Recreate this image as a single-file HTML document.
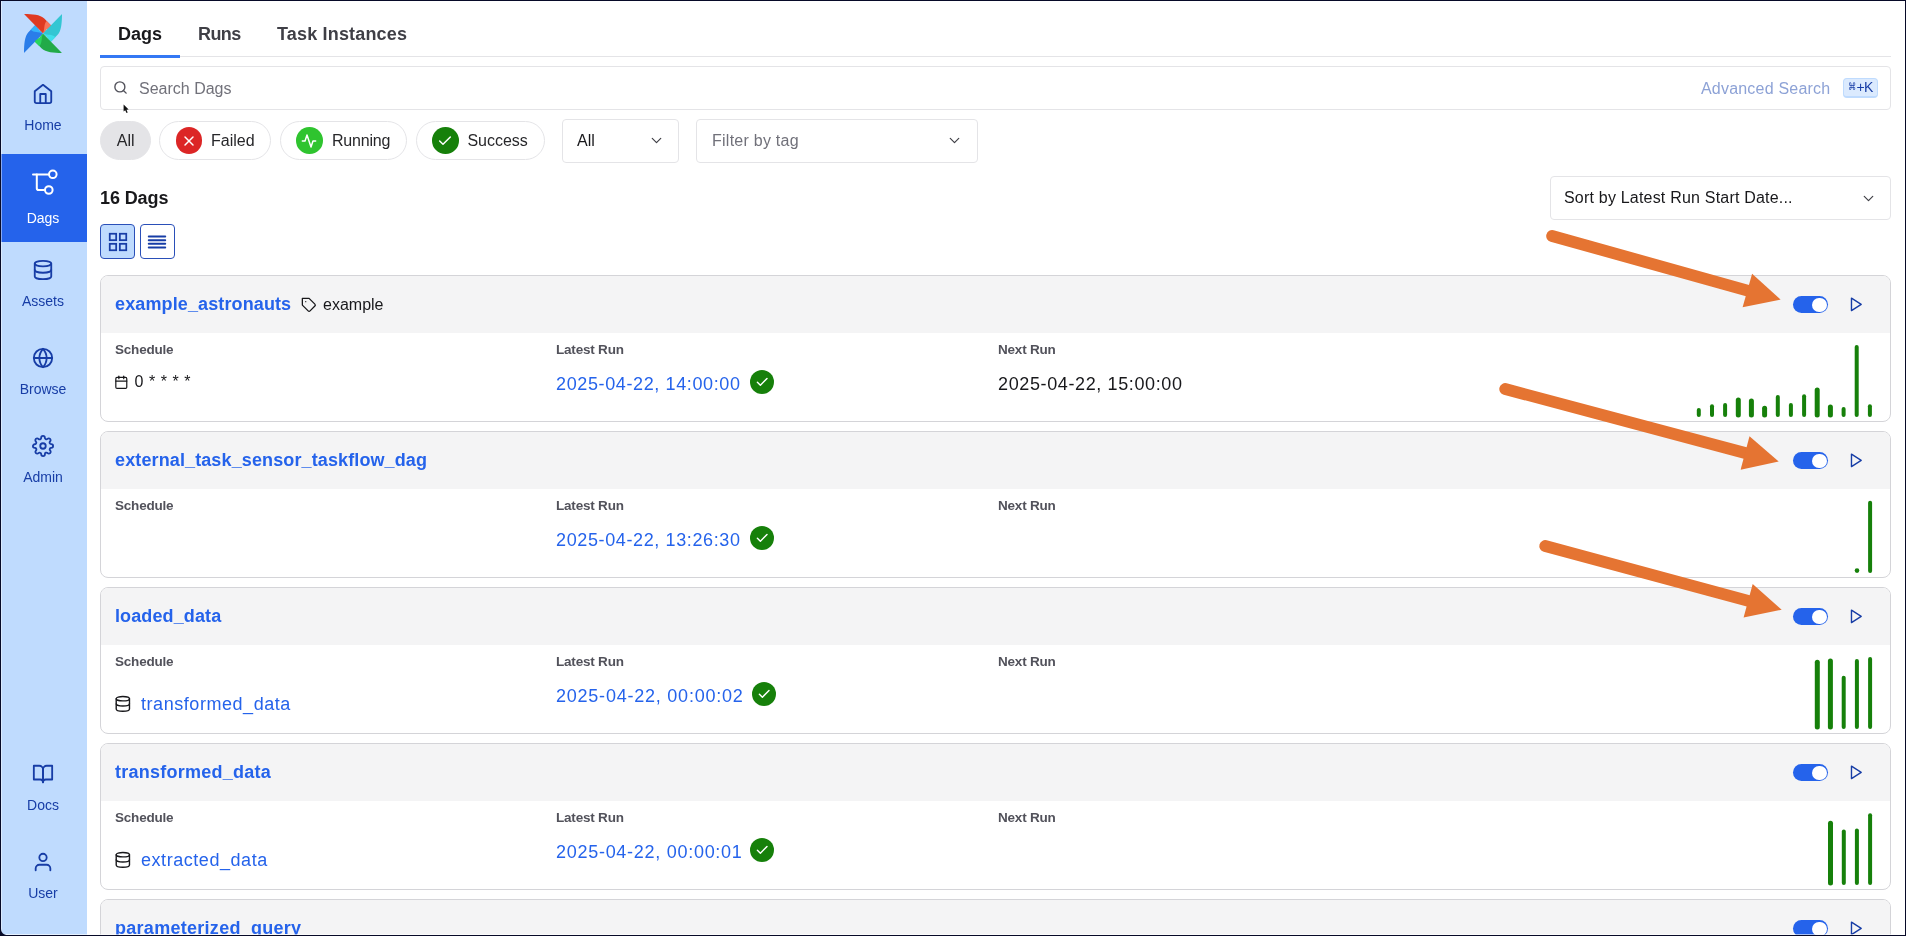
<!DOCTYPE html>
<html lang="en">
<head>
<meta charset="utf-8">
<title>Dags - Airflow</title>
<style>
*{box-sizing:border-box;margin:0;padding:0}
html,body{width:1906px;height:936px;overflow:hidden;background:#fff}
body{font-family:"Liberation Sans",sans-serif;color:#18181b;position:relative}
.abs{position:absolute}
a{text-decoration:none;color:inherit}
/* window frame */
#frame-top{left:0;top:0;width:1906px;height:1px;background:#070a28}
#frame-left{left:0;top:0;width:1px;height:936px;background:#070a28}
#frame-right{left:1905px;top:0;width:1px;height:936px;background:#070a28}
#frame-bottom{left:0;top:935px;width:1906px;height:1px;background:#070a28}
#hl-bottom{left:1px;top:934px;width:1904px;height:1px;background:rgba(255,255,255,.6)}
#hl-left{left:1px;top:1px;width:1px;height:933px;background:rgba(255,255,255,.45)}
#main{position:absolute;left:0;top:0;width:1906px;height:936px;will-change:transform}
/* sidebar */
#sidebar{left:1px;top:1px;width:86px;height:934px;background:#bfdbfe;will-change:transform}
.nav{position:absolute;left:0;width:86px;height:88px;color:#173da6}
.nav.active{background:#2563eb;color:#fff}
.nav svg{position:absolute;fill:none;stroke:currentColor;stroke-linecap:round;stroke-linejoin:round}
.nav span{position:absolute;left:-1px;width:86px;text-align:center;font-size:14px;line-height:16px;letter-spacing:0}
/* tabs */
.tab{top:23px;font-size:18px;font-weight:700;line-height:22px;color:#3f3f46;white-space:nowrap}
/* generic */
.box{border:1px solid #e4e4e7;border-radius:4px;background:#fff}
.pill{top:121px;height:39px;border:1px solid #e4e4e7;border-radius:20px;background:#fff}
.pill .dot{position:absolute;left:15.8px;top:5.2px;width:26.6px;height:26.6px;border-radius:50%}
.pill .dot svg{position:absolute;left:5px;top:5.6px;width:16px;height:16px;fill:none;stroke:#fff;stroke-width:2.2;stroke-linecap:round;stroke-linejoin:round}
.pill span{position:absolute;top:9.4px;font-size:16px;line-height:20px;color:#27272a;white-space:nowrap}
.ico{fill:none;stroke:currentColor;stroke-linecap:round;stroke-linejoin:round}
/* cards */
.card{left:100px;width:1791px;height:147px;border:1px solid #d4d4d8;border-radius:8px;background:#fff;overflow:hidden}
.card .hd{position:absolute;left:0;top:0;width:100%;height:57px;background:#f4f4f5}
.card .name{position:absolute;left:14px;top:17px;font-size:18px;font-weight:700;line-height:22px;color:#2563eb;white-space:nowrap;letter-spacing:0.12px}
.card .lbl{position:absolute;top:66px;font-size:13.5px;font-weight:700;line-height:16px;color:#52525b;white-space:nowrap;letter-spacing:-0.2px}
.card .val{position:absolute;top:97px;font-size:18px;line-height:22px;white-space:nowrap;letter-spacing:0.62px}
.blue{color:#2563eb}
.switch{position:absolute;left:1692px;top:20px;width:35px;height:17px;border-radius:8.5px;background:#2563eb}
.switch i{position:absolute;right:1.3px;top:1.7px;width:14.4px;height:14.4px;border-radius:50%;background:#fff}
.play{position:absolute;left:1747.1px;top:20.4px;width:16.7px;height:16.7px;color:#173da6;stroke-width:2}
.ok{position:absolute;width:24.2px;height:24.2px;border-radius:50%;background:#16800a}
.ok svg{position:absolute;left:5.35px;top:5.3px;width:14.4px;height:14.4px;fill:none;stroke:#fff;stroke-width:2.4;stroke-linecap:round;stroke-linejoin:round}
.bars{position:absolute;left:0;top:0;width:1791px;height:147px}
.bars line{stroke:#16800a;stroke-width:4;stroke-linecap:round}
</style>
</head>
<body>
<!-- SIDEBAR -->
<div id="sidebar" class="abs">
<svg class="abs" style="left:23px;top:12.8px;width:38px;height:39px" viewBox="0 0 60 60" preserveAspectRatio="none">
<g id="blade-blue"><path fill="#2a7de9" d="M0.4,59.6 L29.7,30.2 C27.9,26.8 24.7,26.3 23.4,24.6 C19.9,19.8 19,17 17.5,17.2 L6.9,28 C0.9,34 0.1,47.5 0,59.4 Z"/><path fill="#36b3fa" d="M29.7,30.2 C27.9,26.8 24.7,26.3 23.4,24.6 C19.9,19.8 19,17 17.5,17.2 L10.6,24.2 C15.5,29.5 23,26.5 29.7,30.2 Z"/></g>
<g transform="rotate(90 30 30)"><path fill="#e03a22" d="M0.4,59.6 L29.7,30.2 C27.9,26.8 24.7,26.3 23.4,24.6 C19.9,19.8 19,17 17.5,17.2 L6.9,28 C0.9,34 0.1,47.5 0,59.4 Z"/><path fill="#f9755a" d="M29.7,30.2 C27.9,26.8 24.7,26.3 23.4,24.6 C19.9,19.8 19,17 17.5,17.2 L10.6,24.2 C15.5,29.5 23,26.5 29.7,30.2 Z"/></g>
<g transform="rotate(180 30 30)"><path fill="#33c6d3" d="M0.4,59.6 L29.7,30.2 C27.9,26.8 24.7,26.3 23.4,24.6 C19.9,19.8 19,17 17.5,17.2 L6.9,28 C0.9,34 0.1,47.5 0,59.4 Z"/><path fill="#3fdfeb" d="M29.7,30.2 C27.9,26.8 24.7,26.3 23.4,24.6 C19.9,19.8 19,17 17.5,17.2 L10.6,24.2 C15.5,29.5 23,26.5 29.7,30.2 Z"/></g>
<g transform="rotate(270 30 30)"><path fill="#22aa48" d="M0.4,59.6 L29.7,30.2 C27.9,26.8 24.7,26.3 23.4,24.6 C19.9,19.8 19,17 17.5,17.2 L6.9,28 C0.9,34 0.1,47.5 0,59.4 Z"/><path fill="#2ad55e" d="M29.7,30.2 C27.9,26.8 24.7,26.3 23.4,24.6 C19.9,19.8 19,17 17.5,17.2 L10.6,24.2 C15.5,29.5 23,26.5 29.7,30.2 Z"/></g>
</svg>
<a class="nav" style="top:65px"><svg style="left:31px;top:17px;width:22px;height:22px;stroke-width:2" viewBox="0 0 24 24"><path d="M3 9l9-7 9 7v11a2 2 0 0 1-2 2H5a2 2 0 0 1-2-2z"/><polyline points="9 22 9 12 15 12 15 22"/></svg><span style="top:51px">Home</span></a>
<a class="nav active" style="top:153px"><svg style="left:29px;top:13.2px;width:30px;height:30px;stroke-width:2" viewBox="0 0 30 30"><path d="M3 7.5H18.5"/><circle cx="22.8" cy="7.3" r="3.8"/><path d="M6.8 7.5V21.2a1.8 1.8 0 0 0 1.8 1.8H14.8"/><circle cx="18.8" cy="23" r="3.8"/></svg><span style="top:56px">Dags</span></a>
<a class="nav" style="top:241px"><svg style="left:31px;top:17px;width:22px;height:22px;stroke-width:2" viewBox="0 0 24 24"><ellipse cx="12" cy="5" rx="9" ry="3"/><path d="M21 12c0 1.66-4 3-9 3s-9-1.34-9-3"/><path d="M3 5v14c0 1.66 4 3 9 3s9-1.34 9-3V5"/></svg><span style="top:51px">Assets</span></a>
<a class="nav" style="top:329px"><svg style="left:31px;top:17px;width:22px;height:22px;stroke-width:2" viewBox="0 0 24 24"><circle cx="12" cy="12" r="10"/><line x1="2" y1="12" x2="22" y2="12"/><path d="M12 2a15.3 15.3 0 0 1 4 10 15.3 15.3 0 0 1-4 10 15.3 15.3 0 0 1-4-10 15.3 15.3 0 0 1 4-10z"/></svg><span style="top:51px">Browse</span></a>
<a class="nav" style="top:417px"><svg style="left:31px;top:17px;width:22px;height:22px;stroke-width:2" viewBox="0 0 24 24"><circle cx="12" cy="12" r="3"/><path d="M19.4 15a1.65 1.65 0 0 0 .33 1.82l.06.06a2 2 0 0 1 0 2.83 2 2 0 0 1-2.83 0l-.06-.06a1.65 1.65 0 0 0-1.82-.33 1.65 1.65 0 0 0-1 1.51V21a2 2 0 0 1-2 2 2 2 0 0 1-2-2v-.09A1.65 1.65 0 0 0 9 19.4a1.65 1.65 0 0 0-1.82.33l-.06.06a2 2 0 0 1-2.83 0 2 2 0 0 1 0-2.83l.06-.06a1.65 1.65 0 0 0 .33-1.82 1.65 1.65 0 0 0-1.51-1H3a2 2 0 0 1-2-2 2 2 0 0 1 2-2h.09A1.65 1.65 0 0 0 4.6 9a1.65 1.65 0 0 0-.33-1.82l-.06-.06a2 2 0 0 1 0-2.83 2 2 0 0 1 2.83 0l.06.06a1.65 1.65 0 0 0 1.82.33H9a1.65 1.65 0 0 0 1-1.51V3a2 2 0 0 1 2-2 2 2 0 0 1 2 2v.09a1.65 1.65 0 0 0 1 1.51 1.65 1.65 0 0 0 1.82-.33l.06-.06a2 2 0 0 1 2.83 0 2 2 0 0 1 0 2.83l-.06.06a1.65 1.65 0 0 0-.33 1.82V9a1.65 1.65 0 0 0 1.51 1H21a2 2 0 0 1 2 2 2 2 0 0 1-2 2h-.09a1.65 1.65 0 0 0-1.51 1z"/></svg><span style="top:51px">Admin</span></a>
<a class="nav" style="top:745px"><svg style="left:31px;top:17px;width:22px;height:22px;stroke-width:2" viewBox="0 0 24 24"><path d="M2 3h6a4 4 0 0 1 4 4v14a3 3 0 0 0-3-3H2z"/><path d="M22 3h-6a4 4 0 0 0-4 4v14a3 3 0 0 1 3-3h7z"/></svg><span style="top:51px">Docs</span></a>
<a class="nav" style="top:833px"><svg style="left:31px;top:17px;width:22px;height:22px;stroke-width:2" viewBox="0 0 24 24"><path d="M20 21v-2a4 4 0 0 0-4-4H8a4 4 0 0 0-4 4v2"/><circle cx="12" cy="7" r="4"/></svg><span style="top:51px">User</span></a>
</div>
<!-- MAIN -->
<div id="main">
<!-- tabs -->
<div class="abs" style="left:100px;top:56px;width:1791px;height:1px;background:#e4e4e7"></div>
<div class="abs" style="left:100px;top:55px;width:80px;height:3px;background:#3478f4"></div>
<div class="abs tab" style="left:118px;color:#18181b">Dags</div>
<div class="abs tab" style="left:198px;letter-spacing:-0.6px">Runs</div>
<div class="abs tab" style="left:277px;letter-spacing:0.17px">Task Instances</div>
<!-- search -->
<div class="abs box" style="left:100px;top:66px;width:1791px;height:44px"></div>
<svg class="abs ico" style="left:113px;top:80px;width:15px;height:15px;color:#52525b;stroke-width:2.2" viewBox="0 0 24 24"><circle cx="11" cy="11" r="8"/><line x1="21" y1="21" x2="16.65" y2="16.65"/></svg>
<div class="abs" style="left:139px;top:78.5px;font-size:16px;line-height:20px;color:#71717a;white-space:nowrap">Search Dags</div>
<div class="abs" style="left:1701px;top:78.5px;font-size:16px;line-height:20px;color:#8da2d6;white-space:nowrap;letter-spacing:0.2px">Advanced Search</div>
<div class="abs" style="left:1843px;top:78px;width:35px;height:20px;border:1px solid #bfdbfe;border-bottom-width:2px;background:#dbeafe;border-radius:4px;color:#173da6"><span class="abs" style="left:3.8px;top:2.7px;font-size:10px;line-height:10px;font-family:'DejaVu Sans','Liberation Sans',sans-serif;transform:scaleX(.82);transform-origin:0 0">⌘</span><span class="abs" style="left:12.4px;top:0px;font-size:14px;line-height:16px;letter-spacing:-0.6px">+K</span></div>
<svg class="abs" style="left:120px;top:100px;width:12px;height:16px" viewBox="0 0 12 16"><polygon points="3.6,4.6 3.6,11.6 5.2,10.2 6.5,13 7.7,12.5 6.5,9.8 8.6,9.6" fill="#111"/></svg>
<!-- filter pills -->
<div class="abs pill" style="left:100px;width:51px;background:#e4e4e7"><span style="left:15.8px">All</span></div>
<div class="abs pill" style="left:159px;width:112px"><div class="dot" style="background:#dc2626"><svg viewBox="0 0 24 24"><line x1="18" y1="6" x2="6" y2="18"/><line x1="6" y1="6" x2="18" y2="18"/></svg></div><span style="left:51px">Failed</span></div>
<div class="abs pill" style="left:280px;width:127px"><div class="dot" style="background:#2fc42f;left:15.4px"><svg viewBox="0 0 24 24"><polyline points="22 12 18 12 15 21 9 3 6 12 2 12"/></svg></div><span style="left:51px;letter-spacing:-0.2px">Running</span></div>
<div class="abs pill" style="left:416px;width:129px"><div class="dot" style="background:#16800a;left:15px"><svg viewBox="0 0 24 24"><polyline points="20 6 9 17 4 12"/></svg></div><span style="left:50.4px">Success</span></div>
<!-- selects -->
<div class="abs box" style="left:562px;top:119px;width:117px;height:44px"></div>
<div class="abs" style="left:577px;top:131px;font-size:16px;line-height:20px;color:#18181b">All</div>
<svg class="abs ico" style="left:648.4px;top:132.4px;width:17px;height:17px;color:#3f3f46;stroke-width:1.7" viewBox="0 0 24 24"><polyline points="6 9 12 15 18 9"/></svg>
<div class="abs box" style="left:696px;top:119px;width:282px;height:44px"></div>
<div class="abs" style="left:712px;top:131px;font-size:16px;line-height:20px;color:#71717a;letter-spacing:0.25px">Filter by tag</div>
<svg class="abs ico" style="left:946.4px;top:132.4px;width:17px;height:17px;color:#3f3f46;stroke-width:1.7" viewBox="0 0 24 24"><polyline points="6 9 12 15 18 9"/></svg>
<!-- count + sort -->
<div class="abs" style="left:100px;top:187px;font-size:18px;font-weight:700;line-height:22px;color:#18181b;white-space:nowrap;letter-spacing:-0.1px">16 Dags</div>
<div class="abs box" style="left:1550px;top:176px;width:341px;height:44px"></div>
<div class="abs" style="left:1564px;top:188px;font-size:16px;line-height:20px;color:#18181b;white-space:nowrap;letter-spacing:0.2px">Sort by Latest Run Start Date...</div>
<svg class="abs ico" style="left:1860.4px;top:189.5px;width:17px;height:17px;color:#3f3f46;stroke-width:1.7" viewBox="0 0 24 24"><polyline points="6 9 12 15 18 9"/></svg>
<!-- view toggle -->
<div class="abs" style="left:100px;top:224px;width:35px;height:35px;border:1px solid #2a4fb8;border-radius:4px;background:#bfdbfe"></div>
<svg class="abs ico" style="left:107px;top:231px;width:22px;height:22px;color:#173da6;stroke-width:1.9;stroke-linejoin:miter;stroke-linecap:butt" viewBox="0 0 24 24"><rect x="3" y="3" width="7" height="7"/><rect x="14" y="3" width="7" height="7"/><rect x="14" y="14" width="7" height="7"/><rect x="3" y="14" width="7" height="7"/></svg>
<div class="abs" style="left:140px;top:224px;width:35px;height:35px;border:1px solid #2a4fb8;border-radius:4px;background:#fff"></div>
<svg class="abs ico" style="left:146.1px;top:230.8px;width:22px;height:22px;color:#173da6;stroke-width:2.1;stroke-linecap:round" viewBox="0 0 24 24"><line x1="21" y1="10" x2="3" y2="10"/><line x1="21" y1="6" x2="3" y2="6"/><line x1="21" y1="14" x2="3" y2="14"/><line x1="21" y1="18" x2="3" y2="18"/></svg>
<!-- CARDS -->
<div class="abs card" style="top:275px"><div class="hd"></div><a class="name">example_astronauts</a><svg class="abs ico" style="left:199.5px;top:20.6px;width:16.2px;height:16.2px;color:#18181b;stroke-width:1.9" viewBox="0 0 24 24"><path d="M20.59 13.41l-7.17 7.17a2 2 0 0 1-2.83 0L2 12V2h10l8.59 8.59a2 2 0 0 1 0 2.82z"/><line x1="7" y1="7" x2="7.01" y2="7"/></svg><span class="abs" style="left:222px;top:19px;font-size:16px;line-height:20px;white-space:nowrap">example</span><div class="switch"><i></i></div><svg class="play ico" viewBox="0 0 24 24"><polygon points="5 3 19 12 5 21 5 3"/></svg><div class="lbl" style="left:14px">Schedule</div><div class="lbl" style="left:455px">Latest Run</div><div class="lbl" style="left:897px">Next Run</div><svg class="abs ico" style="left:13.4px;top:98.9px;width:14.6px;height:14.6px;color:#18181b;stroke-width:2" viewBox="0 0 24 24"><rect x="3" y="4" width="18" height="18" rx="2" ry="2"/><line x1="16" y1="2" x2="16" y2="6"/><line x1="8" y1="2" x2="8" y2="6"/><line x1="3" y1="10" x2="21" y2="10"/></svg><span class="abs" style="left:33.6px;top:96.3px;font-size:16px;line-height:20px;white-space:pre;letter-spacing:0.55px">0 * * * *</span><a class="val blue" style="left:455px">2025-04-22, 14:00:00</a><div class="ok" style="left:648.8px;top:94px"><svg viewBox="0 0 24 24"><polyline points="20 6 9 17 4 12"/></svg></div><div class="val" style="left:897px">2025-04-22, 15:00:00</div><svg class="bars"><line x1="1597.8" y1="134.1" x2="1597.8" y2="139"/><line x1="1611.0" y1="130.2" x2="1611.0" y2="139"/><line x1="1624.1" y1="129.0" x2="1624.1" y2="139"/><line x1="1637.3" y1="123.9" x2="1637.3" y2="139" style="stroke-width:5"/><line x1="1650.4" y1="125.0" x2="1650.4" y2="139" style="stroke-width:5"/><line x1="1663.6" y1="132.2" x2="1663.6" y2="139" style="stroke-width:5"/><line x1="1676.8" y1="121.1" x2="1676.8" y2="139"/><line x1="1689.9" y1="129.0" x2="1689.9" y2="139"/><line x1="1703.1" y1="120.3" x2="1703.1" y2="139"/><line x1="1716.2" y1="114.0" x2="1716.2" y2="139" style="stroke-width:5"/><line x1="1729.4" y1="131.0" x2="1729.4" y2="139" style="stroke-width:5"/><line x1="1742.6" y1="133.1" x2="1742.6" y2="139"/><line x1="1755.7" y1="70.9" x2="1755.7" y2="139"/><line x1="1768.9" y1="130.2" x2="1768.9" y2="139"/></svg></div>
<div class="abs card" style="top:431px"><div class="hd"></div><a class="name">external_task_sensor_taskflow_dag</a><div class="switch"><i></i></div><svg class="play ico" viewBox="0 0 24 24"><polygon points="5 3 19 12 5 21 5 3"/></svg><div class="lbl" style="left:14px">Schedule</div><div class="lbl" style="left:455px">Latest Run</div><div class="lbl" style="left:897px">Next Run</div><a class="val blue" style="left:455px">2025-04-22, 13:26:30</a><div class="ok" style="left:648.8px;top:94px"><svg viewBox="0 0 24 24"><polyline points="20 6 9 17 4 12"/></svg></div><svg class="bars"><line x1="1769.1" y1="70.7" x2="1769.1" y2="139"/></svg><svg class="bars"><circle cx="1756" cy="138.6" r="2.3" fill="#16800a"/></svg></div>
<div class="abs card" style="top:587px"><div class="hd"></div><a class="name">loaded_data</a><div class="switch"><i></i></div><svg class="play ico" viewBox="0 0 24 24"><polygon points="5 3 19 12 5 21 5 3"/></svg><div class="lbl" style="left:14px">Schedule</div><div class="lbl" style="left:455px">Latest Run</div><div class="lbl" style="left:897px">Next Run</div><svg class="abs ico" style="left:12.9px;top:106.7px;width:17.7px;height:17.7px;color:#18181b;stroke-width:1.9" viewBox="0 0 24 24"><ellipse cx="12" cy="5" rx="9" ry="3"/><path d="M21 12c0 1.66-4 3-9 3s-9-1.34-9-3"/><path d="M3 5v14c0 1.66 4 3 9 3s9-1.34 9-3V5"/></svg><a class="abs blue" style="left:40px;top:105px;font-size:18px;line-height:22px;white-space:nowrap;letter-spacing:0.55px">transformed_data</a><a class="val blue" style="left:455px;letter-spacing:.77px">2025-04-22, 00:00:02</a><div class="ok" style="left:650.9px;top:94px"><svg viewBox="0 0 24 24"><polyline points="20 6 9 17 4 12"/></svg></div><svg class="bars"><line x1="1716.3" y1="74.3" x2="1716.3" y2="139" style="stroke-width:5"/><line x1="1729.4" y1="73.0" x2="1729.4" y2="139" style="stroke-width:5"/><line x1="1742.7" y1="89.8" x2="1742.7" y2="139"/><line x1="1755.9" y1="73.0" x2="1755.9" y2="139"/><line x1="1769.1" y1="71.1" x2="1769.1" y2="139"/></svg></div>
<div class="abs card" style="top:743px"><div class="hd"></div><a class="name" style="letter-spacing:.25px">transformed_data</a><div class="switch"><i></i></div><svg class="play ico" viewBox="0 0 24 24"><polygon points="5 3 19 12 5 21 5 3"/></svg><div class="lbl" style="left:14px">Schedule</div><div class="lbl" style="left:455px">Latest Run</div><div class="lbl" style="left:897px">Next Run</div><svg class="abs ico" style="left:12.9px;top:106.7px;width:17.7px;height:17.7px;color:#18181b;stroke-width:1.9" viewBox="0 0 24 24"><ellipse cx="12" cy="5" rx="9" ry="3"/><path d="M21 12c0 1.66-4 3-9 3s-9-1.34-9-3"/><path d="M3 5v14c0 1.66 4 3 9 3s9-1.34 9-3V5"/></svg><a class="abs blue" style="left:40px;top:105px;font-size:18px;line-height:22px;white-space:nowrap;letter-spacing:0.55px">extracted_data</a><a class="val blue" style="left:455px;letter-spacing:.72px">2025-04-22, 00:00:01</a><div class="ok" style="left:648.8px;top:94px"><svg viewBox="0 0 24 24"><polyline points="20 6 9 17 4 12"/></svg></div><svg class="bars"><line x1="1729.5" y1="79.3" x2="1729.5" y2="139" style="stroke-width:5"/><line x1="1742.8" y1="87.4" x2="1742.8" y2="139"/><line x1="1755.9" y1="86.4" x2="1755.9" y2="139"/><line x1="1769.1" y1="71.3" x2="1769.1" y2="139"/></svg></div>
<div class="abs card" style="top:899px"><div class="hd"></div><a class="name" style="letter-spacing:.28px">parameterized_query</a><div class="switch"><i></i></div><svg class="play ico" viewBox="0 0 24 24"><polygon points="5 3 19 12 5 21 5 3"/></svg><div class="lbl" style="left:14px">Schedule</div><div class="lbl" style="left:455px">Latest Run</div><div class="lbl" style="left:897px">Next Run</div></div>

</div>
<svg class="abs" style="left:0;top:0;width:1906px;height:936px;pointer-events:none" viewBox="0 0 1906 936">
<line x1="1552.1" y1="236.0" x2="1749.35" y2="291.10" stroke="#e57432" stroke-width="11.8" stroke-linecap="round"/><polygon points="1780.6,299.6 1752.1,273.8 1742.6,307.3" fill="#e57432"/>
<line x1="1505.2" y1="389.0" x2="1747.05" y2="453.55" stroke="#e57432" stroke-width="11.8" stroke-linecap="round"/><polygon points="1778.7,461.6 1749.5,436.2 1740.6,469.8" fill="#e57432"/>
<line x1="1545.2" y1="546.0" x2="1750.15" y2="601.38" stroke="#e57432" stroke-width="11.8" stroke-linecap="round"/><polygon points="1781.7,609.7 1752.7,584.05 1743.6,617.6" fill="#e57432"/>
</svg>
<div id="hl-bottom" class="abs"></div><div id="hl-left" class="abs"></div>
<svg class="abs" style="left:0;top:928px;width:8px;height:8px" viewBox="0 0 8 8"><path d="M0 1.5V8H6.5C2.5 8 0 5.5 0 1.5Z" fill="#070a28" transform="translate(1,-1)"/></svg>
<div id="frame-top" class="abs"></div>
<div id="frame-left" class="abs"></div>
<div id="frame-right" class="abs"></div>
<div id="frame-bottom" class="abs"></div>
</body>
</html>
